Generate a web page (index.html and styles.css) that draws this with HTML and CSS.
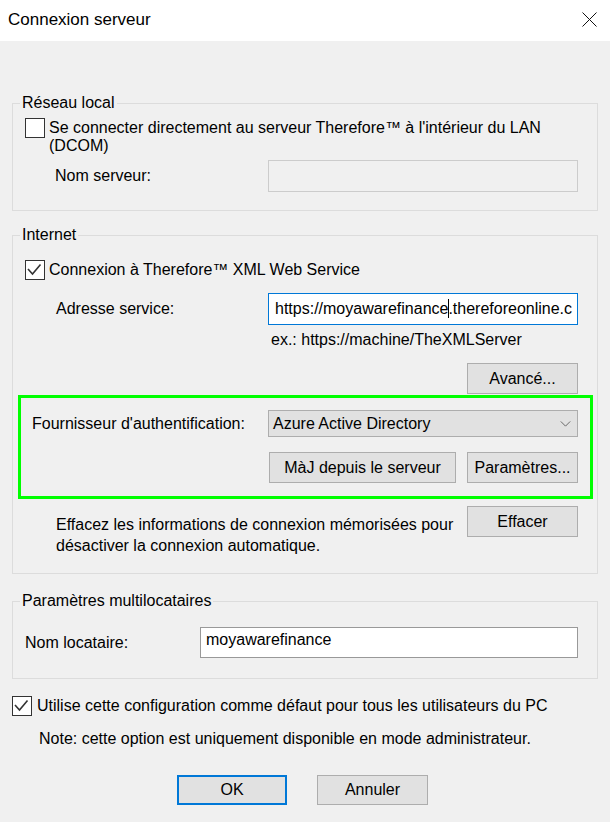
FILE: index.html
```html
<!DOCTYPE html>
<html lang="fr">
<head>
  <meta charset="UTF-8" />
  <meta name="viewport" content="width=device-width, initial-scale=1.0"/>
  <title>Connexion serveur</title>

  <link rel="stylesheet" href="styles.css">
</head>

<body>
  <div class="dialog">
    <div class="titlebar">
      <span class="title">Connexion serveur</span>
      <svg class="close" width="15" height="15" viewBox="0 0 15 15">
        <path d="M0.5 0.5 L14.5 14.5 M14.5 0.5 L0.5 14.5" stroke="#111" stroke-width="1" fill="none"/>
      </svg>
    </div>

    <div class="content">
      <fieldset class="group group-lan">
        <legend>Réseau local</legend>
        <div class="check-row">
          <span class="checkbox"></span>
          <span class="check-label wrap">Se connecter directement au serveur Therefore™ à l'intérieur du LAN (DCOM)</span>
        </div>
        <div class="field-row lan-field">
          <span class="field-label">Nom serveur:</span>
          <div class="textbox disabled"></div>
        </div>
      </fieldset>

      <fieldset class="group group-internet">
        <legend>Internet</legend>
        <div class="check-row internet-check">
          <span class="checkbox">
            <svg width="20" height="20" viewBox="0 0 20 20"><polyline points="3,9 7.5,14 15.5,4.5" fill="none" stroke="#333" stroke-width="1.6"/></svg>
          </span>
          <span class="check-label">Connexion à Therefore™ XML Web Service</span>
        </div>
        <div class="field-row address-row">
          <span class="field-label">Adresse service:</span>
          <div class="textbox focused"><span>https://moyawarefinance</span><span class="caret"></span><span>.thereforeonline.c</span></div>
        </div>
        <div class="hint">ex.: https://machine/TheXMLServer</div>
        <div class="button-row">
          <button class="btn btn-small">Avancé...</button>
        </div>

        <div class="highlight">
          <div class="auth-row">
            <span class="auth-label">Fournisseur d'authentification:</span>
            <div class="combo">
              <span>Azure Active Directory</span>
              <svg width="12" height="7" viewBox="0 0 12 7"><polyline points="0.5,0.5 6,6 11.5,0.5" fill="none" stroke="#555" stroke-width="1"/></svg>
            </div>
          </div>
          <div class="button-row auth-buttons">
            <button class="btn btn-wide">MàJ depuis le serveur</button>
            <button class="btn btn-small">Paramètres...</button>
          </div>
        </div>

        <div class="clear-row">
          <p class="clear-text">Effacez les informations de connexion mémorisées pour désactiver la connexion automatique.</p>
          <button class="btn btn-small">Effacer</button>
        </div>
      </fieldset>

      <fieldset class="group group-tenant">
        <legend>Paramètres multilocataires</legend>
        <div class="field-row tenant-row">
          <span class="field-label">Nom locataire:</span>
          <div class="textbox tenant-box">moyawarefinance</div>
        </div>
      </fieldset>

      <div class="check-row default-check">
        <span class="checkbox">
          <svg width="20" height="20" viewBox="0 0 20 20"><polyline points="3,9 7.5,14 15.5,4.5" fill="none" stroke="#333" stroke-width="1.6"/></svg>
        </span>
        <span class="check-label">Utilise cette configuration comme défaut pour tous les utilisateurs du PC</span>
      </div>
      <p class="note">Note: cette option est uniquement disponible en mode administrateur.</p>

      <div class="footer">
        <button class="btn btn-default">OK</button>
        <button class="btn btn-small">Annuler</button>
      </div>
    </div>
  </div>
</body>
</html>
```

FILE: styles.css
```css
body {
  margin: 0;
  font-family: 'Segoe UI', 'Liberation Sans', Arial, sans-serif;
  font-size: 16px;
  line-height: 20px;
  color: #000;
  background: #f0f0f0;
}

.dialog {
  width: 610px;
  height: 822px;
  background: #f0f0f0;
  overflow: hidden;
}

.titlebar {
  height: 41px;
  background: #fff;
  display: flex;
  align-items: center;
  justify-content: space-between;
  padding: 0 13px 0 8px;
  box-sizing: border-box;
}

.title {
  font-size: 17px;
  margin-top: -1px;
}

.close {
  display: block;
  margin-top: -2px;
}

.content {
  padding: 0 12px;
}

/* Group boxes */
.group {
  margin: 0;
  padding: 0 19px 0 0;
  border: 1px solid #dcdcdc;
  min-width: 0;
}

.group legend {
  margin-left: 7px;
  padding: 0 2px;
  line-height: 20px;
}

.group-lan {
  margin-top: 52px;
  padding-bottom: 18px;
}

.group-internet {
  margin-top: 14px;
  padding-bottom: 17px;
}

.group-tenant {
  margin-top: 17px;
  padding-bottom: 20px;
}

/* Checkboxes */
.check-row {
  display: flex;
  align-items: flex-start;
  margin-left: 12px;
}

.checkbox {
  width: 20px;
  height: 20px;
  box-sizing: border-box;
  border: 1px solid #333;
  background: #fff;
  flex: none;
  position: relative;
}

.checkbox svg {
  position: absolute;
  top: -1px;
  left: -1px;
}

.check-label {
  margin-left: 4px;
}

.group-lan .check-row {
  margin-top: 5px;
}

.check-label.wrap {
  max-width: 525px;
  line-height: 18px;
  margin-top: 1px;
}

.internet-check {
  margin-top: 15px;
}

.default-check {
  margin-top: 17px;
  margin-left: 0;
}

.default-check .check-label {
  margin-left: 5px;
}

/* Label + textbox rows */
.field-row {
  display: flex;
  align-items: center;
  justify-content: space-between;
  padding-left: 42px;
}

.lan-field {
  margin-top: 5px;
}

.address-row {
  margin-top: 13px;
  padding-left: 43px;
}

.tenant-row {
  margin-top: 16px;
  padding-left: 12px;
}

.textbox {
  width: 310px;
  height: 32px;
  box-sizing: border-box;
  border: 1px solid #7a7a7a;
  background: #fff;
  white-space: nowrap;
  overflow: hidden;
}

.textbox.disabled {
  background: #f0f0f0;
  border-color: #cccccc;
}

.textbox.focused {
  border-color: #0078d7;
  padding: 5px 0 0 6px;
  display: flex;
}

.caret {
  display: inline-block;
  width: 1px;
  height: 19px;
  background: #000;
  margin: 0 -1px 0 0;
  flex: none;
}

.tenant-box {
  width: 378px;
  height: 31px;
  padding: 2px 0 0 5px;
  border-color: #999;
}

.hint {
  margin-top: 5px;
  padding-left: 258px;
}

/* Buttons */
.button-row {
  display: flex;
  justify-content: flex-end;
  gap: 11px;
}

.group-internet > .button-row {
  margin-top: 13px;
}

.btn {
  height: 31px;
  box-sizing: border-box;
  border: 1px solid #adadad;
  background: #e1e1e1;
  font-family: inherit;
  font-size: 16px;
  color: #000;
  padding: 0;
  margin: 0;
}

.btn-small {
  width: 111px;
}

.btn-wide {
  width: 187px;
}

.btn-default {
  width: 110px;
  height: 30px;
  border: 2px solid #0078d7;
}

/* Highlighted authentication block */
.highlight {
  margin: 1px -15px 0 5px;
  border: 3px solid #00ff00;
  padding: 12px 12px 13px 11px;
}

.auth-row {
  display: flex;
  align-items: center;
  justify-content: space-between;
}

.combo {
  width: 310px;
  height: 27px;
  box-sizing: border-box;
  border: 1px solid #adadad;
  background: #e1e1e1;
  display: flex;
  align-items: center;
  justify-content: space-between;
  padding: 0 6px 0 4px;
}

.combo svg {
  width: 11px;
  height: 6px;
}

.auth-buttons {
  margin-top: 15px;
}

/* Clear credentials */
.clear-row {
  display: flex;
  align-items: flex-start;
  justify-content: space-between;
  margin-top: 7px;
  padding-left: 43px;
}

.clear-text {
  margin: 8px 0 0 0;
  width: 405px;
  line-height: 21px;
}

.note {
  margin: 13px 0 0 27px;
}

.footer {
  display: flex;
  gap: 30px;
  margin-top: 26px;
  padding-left: 165px;
}

.footer .btn-small {
  height: 30px;
}
```
